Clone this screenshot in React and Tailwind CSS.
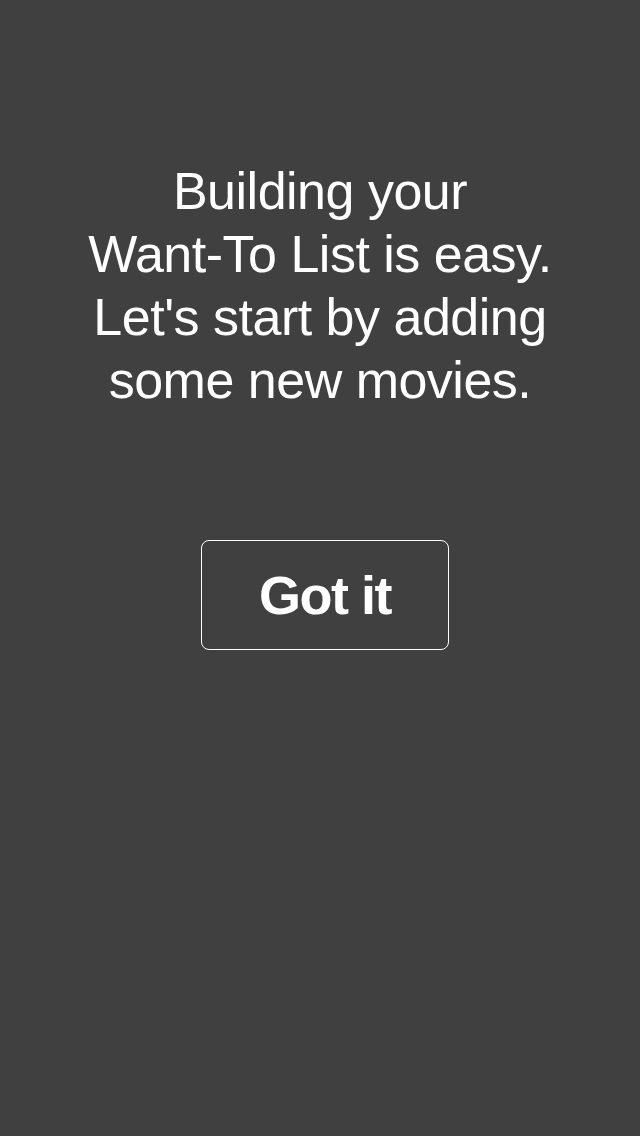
export default function App() {
  return (
    <div className="min-h-[1136px] w-full bg-[#404040] flex flex-col items-center text-white font-['Liberation_Sans',Arial,sans-serif]">
      <p className="mt-[160px] text-center text-[52px] leading-[63px] font-light tracking-[-0.5px]">
        Building your
        <br />
        Want-To List is easy.
        <br />
        Let's start by adding
        <br />
        some new movies.
      </p>
      <button className="mt-[128px] ml-[10px] w-[248px] h-[110px] border border-white rounded-[8px] flex items-center justify-center">
        <span className="text-[54px] font-bold tracking-[-1.5px] leading-none">Got it</span>
      </button>
    </div>
  );
}
